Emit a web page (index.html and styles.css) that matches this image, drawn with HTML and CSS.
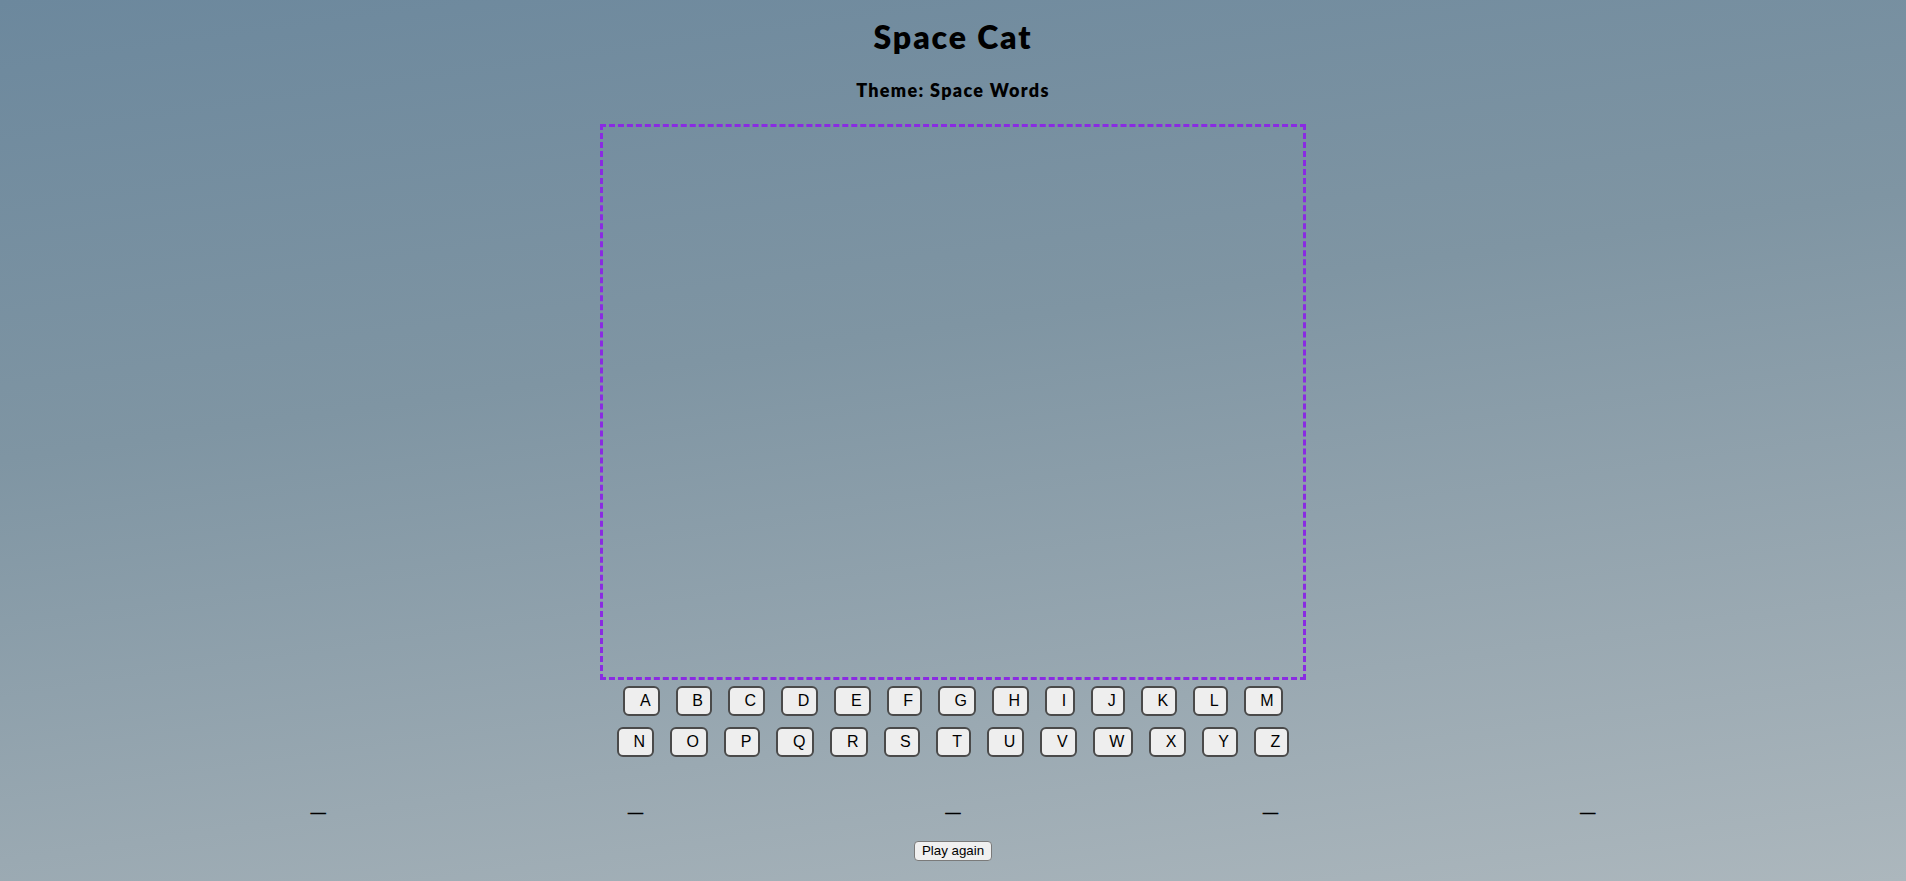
FILE: index.html
```html
<!DOCTYPE html>
<html lang="en">
<head>
<meta charset="utf-8">
<title>Space Cat</title>
<link rel="stylesheet" href="styles.css">
</head>
<body>
<main class="game">
  <h1 class="title">Space Cat</h1>
  <h3 class="theme">Theme: Space Words</h3>
  <div class="stage"></div>
  <div class="keyboard">
    <div class="key-row">
      <button class="key">A</button><button class="key">B</button><button class="key">C</button><button class="key">D</button><button class="key">E</button><button class="key">F</button><button class="key">G</button><button class="key">H</button><button class="key">I</button><button class="key">J</button><button class="key">K</button><button class="key">L</button><button class="key">M</button>
    </div>
    <div class="key-row">
      <button class="key">N</button><button class="key">O</button><button class="key">P</button><button class="key">Q</button><button class="key">R</button><button class="key">S</button><button class="key">T</button><button class="key">U</button><button class="key">V</button><button class="key">W</button><button class="key">X</button><button class="key">Y</button><button class="key">Z</button>
    </div>
  </div>
  <div class="word">
    <span class="blank">_</span><span class="blank">_</span><span class="blank">_</span><span class="blank">_</span><span class="blank">_</span>
  </div>
  <button class="play-again">Play again</button>
</main>
</body>
</html>
```

FILE: styles.css
```css
html {
  min-height: 100%;
  background: linear-gradient(172deg, #6c889d 0%, #7f95a3 40%, #9aa9b2 75%, #acb7bd 100%);
}

body {
  margin: 0;
  min-height: 100vh;
  font-family: "Liberation Sans", Arial, sans-serif;
  color: #000;
}

.game {
  display: flex;
  flex-direction: column;
  align-items: center;
  padding: 18px 8px 0;
}

.title {
  margin: 0;
  font-family: Lato, "Open Sans", sans-serif;
  font-weight: 800;
  font-size: 32px;
  line-height: 38px;
  letter-spacing: 1.9px;
}

.theme {
  margin: 24px 0 0;
  font-family: Lato, "Open Sans", sans-serif;
  font-weight: 800;
  font-size: 18px;
  line-height: 20px;
  letter-spacing: 1.3px;
}

.stage {
  margin-top: 24px;
  width: 700px;
  height: 550px;
  border: 3px dashed #8a2be2;
}

.keyboard {
  margin-top: 6px;
  display: flex;
  flex-direction: column;
  align-items: center;
  gap: 11px;
}

.key-row {
  display: flex;
  gap: 16px;
}

.key {
  font-family: "Liberation Sans", Arial, sans-serif;
  font-size: 16px;
  line-height: 18px;
  padding: 4px 7px 4px 14.6px;
  border: 2px solid #4a4a4a;
  border-radius: 6px;
  background: #eeeeee;
  color: #000;
}

.word {
  align-self: stretch;
  margin-top: 30px;
  display: flex;
  justify-content: space-evenly;
  font-family: "Liberation Sans", Arial, sans-serif;
  font-weight: 700;
  font-size: 26px;
  line-height: 30px;
  -webkit-text-stroke: 0.7px #000;
}

.blank {
  display: block;
}

.play-again {
  margin-top: 24px;
  font-family: "Liberation Sans", Arial, sans-serif;
  font-size: 13.33px;
  line-height: 16px;
  padding: 1px 7px;
  border: 1px solid #7a7a7a;
  border-radius: 4px;
  background: #f0f0f0;
  color: #000;
}
```
